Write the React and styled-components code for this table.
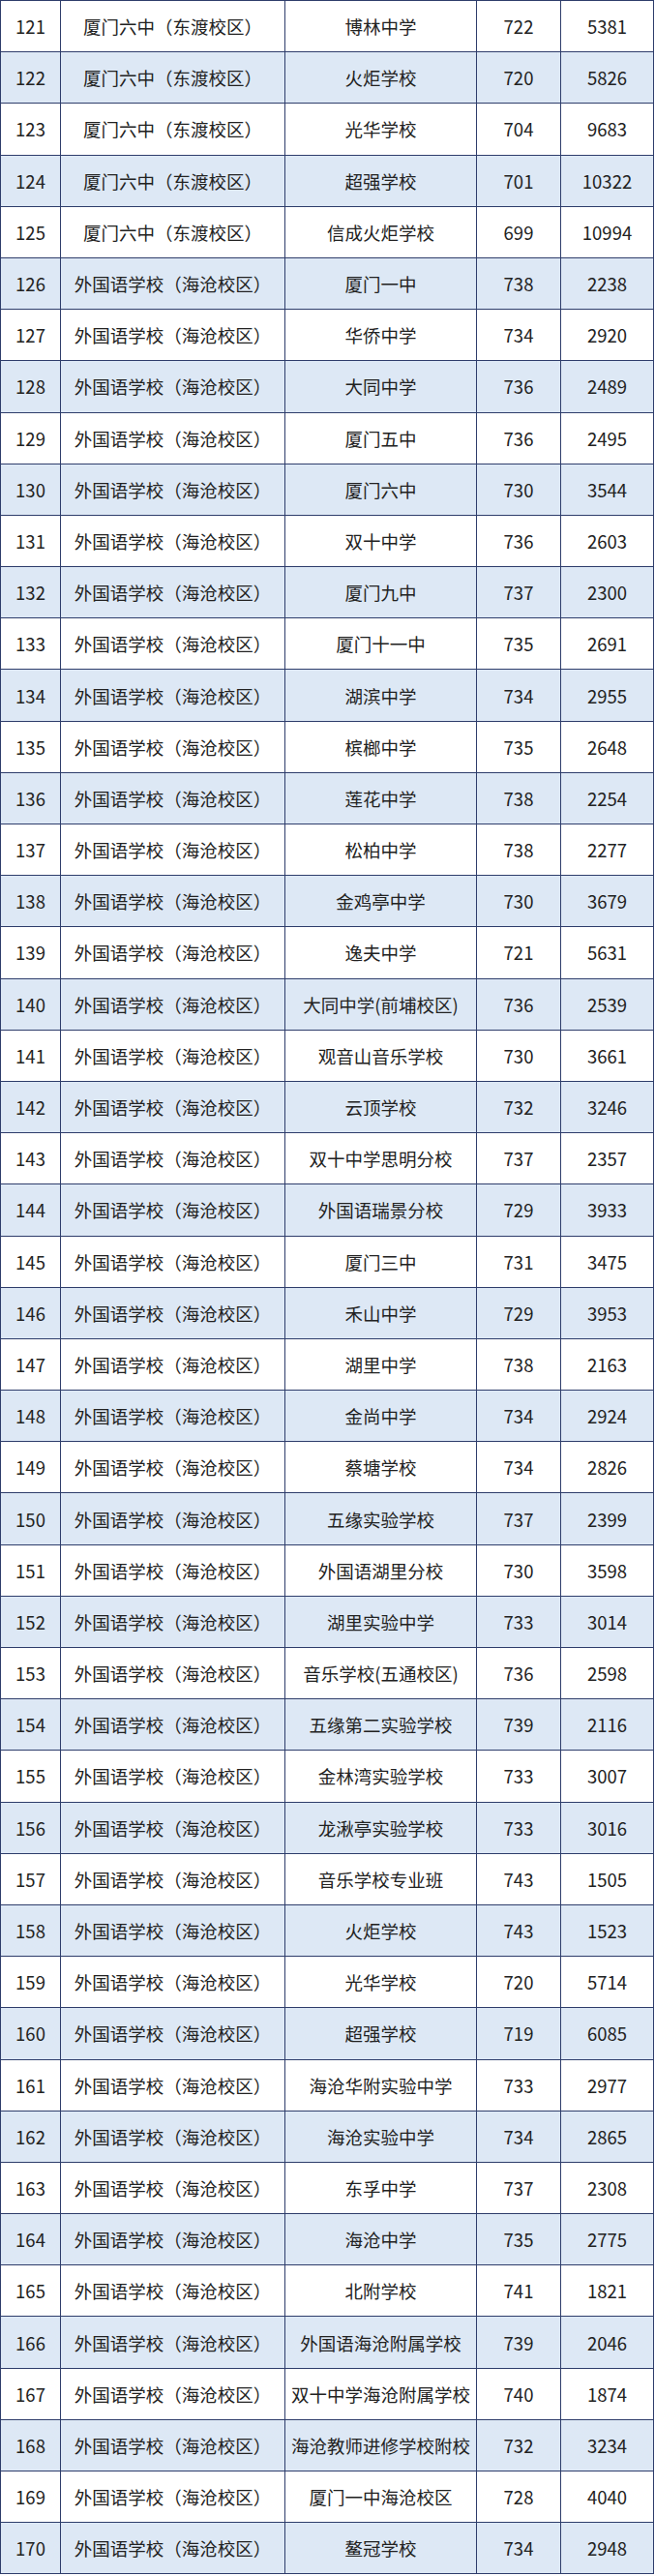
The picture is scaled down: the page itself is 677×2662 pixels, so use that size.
import React from "react";
import styled, { createGlobalStyle } from "styled-components";

const GlobalStyle = createGlobalStyle`
  html, body { margin: 0; padding: 0; background: #ffffff; }
  body { font-family: "Noto Sans CJK SC", "Noto Sans", sans-serif; }
`;

const rows = [
  [121, "厦门六中（东渡校区）", "博林中学", 722, 5381],
  [122, "厦门六中（东渡校区）", "火炬学校", 720, 5826],
  [123, "厦门六中（东渡校区）", "光华学校", 704, 9683],
  [124, "厦门六中（东渡校区）", "超强学校", 701, 10322],
  [125, "厦门六中（东渡校区）", "信成火炬学校", 699, 10994],
  [126, "外国语学校（海沧校区）", "厦门一中", 738, 2238],
  [127, "外国语学校（海沧校区）", "华侨中学", 734, 2920],
  [128, "外国语学校（海沧校区）", "大同中学", 736, 2489],
  [129, "外国语学校（海沧校区）", "厦门五中", 736, 2495],
  [130, "外国语学校（海沧校区）", "厦门六中", 730, 3544],
  [131, "外国语学校（海沧校区）", "双十中学", 736, 2603],
  [132, "外国语学校（海沧校区）", "厦门九中", 737, 2300],
  [133, "外国语学校（海沧校区）", "厦门十一中", 735, 2691],
  [134, "外国语学校（海沧校区）", "湖滨中学", 734, 2955],
  [135, "外国语学校（海沧校区）", "槟榔中学", 735, 2648],
  [136, "外国语学校（海沧校区）", "莲花中学", 738, 2254],
  [137, "外国语学校（海沧校区）", "松柏中学", 738, 2277],
  [138, "外国语学校（海沧校区）", "金鸡亭中学", 730, 3679],
  [139, "外国语学校（海沧校区）", "逸夫中学", 721, 5631],
  [140, "外国语学校（海沧校区）", "大同中学(前埔校区)", 736, 2539],
  [141, "外国语学校（海沧校区）", "观音山音乐学校", 730, 3661],
  [142, "外国语学校（海沧校区）", "云顶学校", 732, 3246],
  [143, "外国语学校（海沧校区）", "双十中学思明分校", 737, 2357],
  [144, "外国语学校（海沧校区）", "外国语瑞景分校", 729, 3933],
  [145, "外国语学校（海沧校区）", "厦门三中", 731, 3475],
  [146, "外国语学校（海沧校区）", "禾山中学", 729, 3953],
  [147, "外国语学校（海沧校区）", "湖里中学", 738, 2163],
  [148, "外国语学校（海沧校区）", "金尚中学", 734, 2924],
  [149, "外国语学校（海沧校区）", "蔡塘学校", 734, 2826],
  [150, "外国语学校（海沧校区）", "五缘实验学校", 737, 2399],
  [151, "外国语学校（海沧校区）", "外国语湖里分校", 730, 3598],
  [152, "外国语学校（海沧校区）", "湖里实验中学", 733, 3014],
  [153, "外国语学校（海沧校区）", "音乐学校(五通校区)", 736, 2598],
  [154, "外国语学校（海沧校区）", "五缘第二实验学校", 739, 2116],
  [155, "外国语学校（海沧校区）", "金林湾实验学校", 733, 3007],
  [156, "外国语学校（海沧校区）", "龙湫亭实验学校", 733, 3016],
  [157, "外国语学校（海沧校区）", "音乐学校专业班", 743, 1505],
  [158, "外国语学校（海沧校区）", "火炬学校", 743, 1523],
  [159, "外国语学校（海沧校区）", "光华学校", 720, 5714],
  [160, "外国语学校（海沧校区）", "超强学校", 719, 6085],
  [161, "外国语学校（海沧校区）", "海沧华附实验中学", 733, 2977],
  [162, "外国语学校（海沧校区）", "海沧实验中学", 734, 2865],
  [163, "外国语学校（海沧校区）", "东孚中学", 737, 2308],
  [164, "外国语学校（海沧校区）", "海沧中学", 735, 2775],
  [165, "外国语学校（海沧校区）", "北附学校", 741, 1821],
  [166, "外国语学校（海沧校区）", "外国语海沧附属学校", 739, 2046],
  [167, "外国语学校（海沧校区）", "双十中学海沧附属学校", 740, 1874],
  [168, "外国语学校（海沧校区）", "海沧教师进修学校附校", 732, 3234],
  [169, "外国语学校（海沧校区）", "厦门一中海沧校区", 728, 4040],
  [170, "外国语学校（海沧校区）", "鳌冠学校", 734, 2948],
];

const Table = styled.div`
  width: 676px;
  border-top: 1.5px solid #2e3d6b;
  border-left: 1.5px solid #2e3d6b;
  box-sizing: border-box;
`;

const Row = styled.div`
  display: grid;
  grid-template-columns: 62px 232px 198px 87px 1fr;
  height: 53.2px;
  background: ${(p) => (p.$shaded ? "#dde8f5" : "#ffffff")};
`;

const Cell = styled.div`
  display: flex;
  align-items: center;
  justify-content: center;
  border-right: 1.5px solid #2e3d6b;
  border-bottom: 1.5px solid #2e3d6b;
  font-size: 18.5px;
  color: #222222;
  white-space: nowrap;
  overflow: hidden;
`;

export default function App() {
  return (
    <>
      <GlobalStyle />
      <Table>
        {rows.map(([n, a, b, c, d]) => (
          <Row key={n} $shaded={n % 2 === 0}>
            <Cell>{n}</Cell>
            <Cell>{a}</Cell>
            <Cell>{b}</Cell>
            <Cell>{c}</Cell>
            <Cell>{d}</Cell>
          </Row>
        ))}
      </Table>
    </>
  );
}
